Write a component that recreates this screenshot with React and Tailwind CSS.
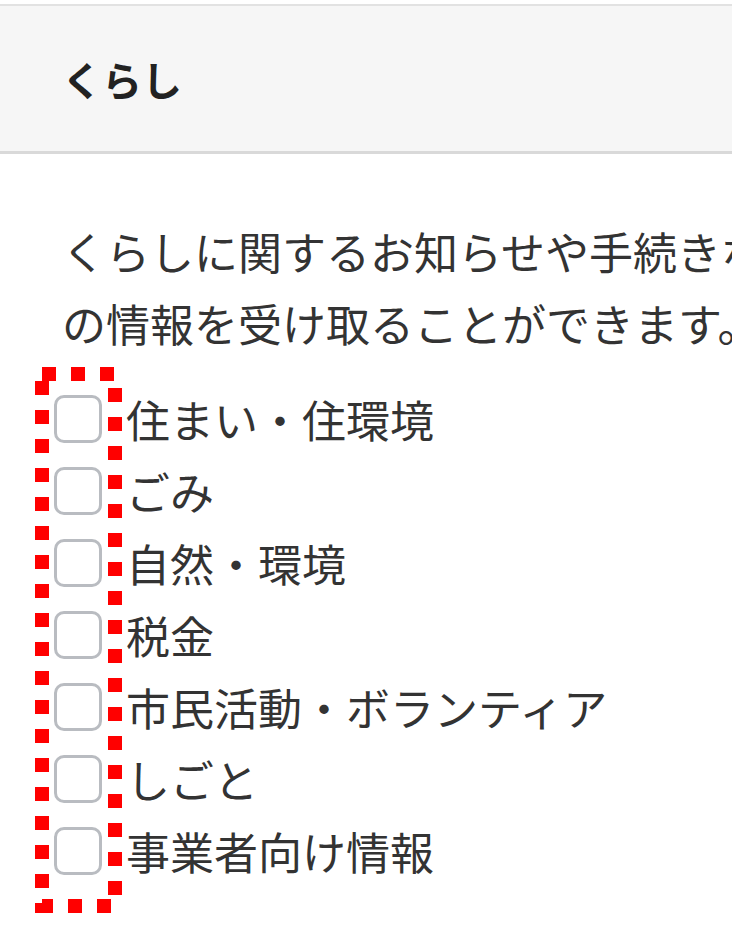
const topics = [
  '住まい・住環境',
  'ごみ',
  '自然・環境',
  '税金',
  '市民活動・ボランティア',
  'しごと',
  '事業者向け情報',
]

// Red dotted annotation around the checkbox column
const DottedFrame = () => (
  <svg
    className="absolute left-[35px] top-[-16px] pointer-events-none"
    width="87"
    height="546"
    viewBox="0 0 87 546"
  >
    <rect
      x="7"
      y="7"
      width="73"
      height="532"
      fill="none"
      stroke="#ff0000"
      strokeWidth="14"
      strokeDasharray="14 15"
    />
  </svg>
)

const App = () => {
  return (
    <div
      className="w-[732px] h-[952px] overflow-hidden bg-white text-[#333]"
      style={{ fontFamily: '"Noto Sans CJK JP", "Noto Sans", sans-serif' }}
    >
      <div className="w-[860px] pt-[4px]">
        {/* Section header */}
        <div className="h-[150px] bg-[#f6f6f6] border-t-2 border-b-[3px] border-t-[#e2e2e2] border-b-[#d9d9d9] flex items-center pl-[62px]">
          <h2 className="text-[40px] font-bold text-[#222] leading-none">くらし</h2>
        </div>

        {/* Description */}
        <p className="mt-[61px] pl-[62px] text-[44px] leading-[72px] whitespace-nowrap">
          くらしに関するお知らせや手続きなど
          <br />
          の情報を受け取ることができます。
        </p>

        {/* Checkbox list */}
        <div className="relative mt-[24px]">
          <ul className="flex flex-col">
            {topics.map((t) => (
              <li key={t} className="h-[72px] flex items-center pl-[54px] gap-[24px]">
                <span className="w-[48px] h-[48px] shrink-0 rounded-[10px] border-[3px] border-[#b9bcc1] bg-white" />
                <span className="text-[44px] leading-none whitespace-nowrap">{t}</span>
              </li>
            ))}
          </ul>
          <DottedFrame />
        </div>
      </div>
    </div>
  )
}

export default App
